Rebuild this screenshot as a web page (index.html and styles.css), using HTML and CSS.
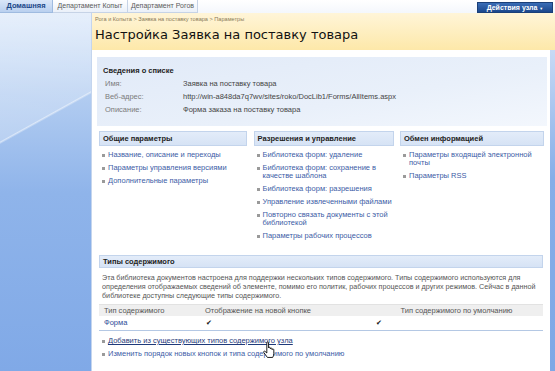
FILE: index.html
```html
<!DOCTYPE html>
<html lang="ru">
<head>
    <meta charset="UTF-8">
    <title>Настройка Заявка на поставку товара</title>
    <link rel="stylesheet" href="styles.css">
</head>
<body>
    <div class="topbar">
        <ul class="tabs">
            <li class="tab tab-home active">Домашняя</li>
            <li class="tab tab-kopyt">Департамент Копыт</li>
            <li class="tab tab-rogov">Департамент Рогов</li>
        </ul>
        <div class="site-actions">Действия узла <span class="caret">▼</span></div>
    </div>

    <div class="page">
        <div class="leftnav"></div>

        <div class="main">
            <div class="titlearea">
                <div class="breadcrumb">Рога и Копыта &gt; Заявка на поставку товара &gt; Параметры</div>
                <h1>Настройка Заявка на поставку товара</h1>
            </div>

            <div class="body-row">
                <div class="content">
                    <div class="listinfo">
                        <div class="listinfo-title">Сведения о списке</div>
                        <div class="info-grid">
                            <div class="info-label">Имя:</div>
                            <div class="info-value">Заявка на поставку товара</div>
                            <div class="info-label">Веб-адрес:</div>
                            <div class="info-value">http://win-a848da7q7wv/sites/roko/DocLib1/Forms/AllItems.aspx</div>
                            <div class="info-label">Описание:</div>
                            <div class="info-value">Форма заказа на поставку товара</div>
                        </div>
                    </div>

                    <div class="settings-cols">
                        <div class="settings-col">
                            <div class="col-head">Общие параметры</div>
                            <ul class="links">
                                <li>Название, описание и переходы</li>
                                <li>Параметры управления версиями</li>
                                <li>Дополнительные параметры</li>
                            </ul>
                        </div>
                        <div class="settings-col">
                            <div class="col-head">Разрешения и управление</div>
                            <ul class="links">
                                <li>Библиотека форм: удаление</li>
                                <li>Библиотека форм: сохранение в качестве шаблона</li>
                                <li>Библиотека форм: разрешения</li>
                                <li>Управление извлеченными файлами</li>
                                <li>Повторно связать документы с этой библиотекой</li>
                                <li>Параметры рабочих процессов</li>
                            </ul>
                        </div>
                        <div class="settings-col">
                            <div class="col-head">Обмен информацией</div>
                            <ul class="links">
                                <li>Параметры входящей электронной почты</li>
                                <li>Параметры RSS</li>
                            </ul>
                        </div>
                    </div>

                    <div class="ctypes">
                        <div class="ct-head">Типы содержимого</div>
                        <p class="ct-desc">Эта библиотека документов настроена для поддержки нескольких типов содержимого. Типы содержимого используются для определения отображаемых сведений об элементе, помимо его политик, рабочих процессов и других режимов. Сейчас в данной библиотеке доступны следующие типы содержимого.</p>
                        <div class="ct-table">
                            <div class="ct-row ct-row-head">
                                <div class="ct-cell">Тип содержимого</div>
                                <div class="ct-cell">Отображение на новой кнопке</div>
                                <div class="ct-cell ct-center">Тип содержимого по умолчанию</div>
                            </div>
                            <div class="ct-row">
                                <div class="ct-cell ct-link">Форма</div>
                                <div class="ct-cell check">✔</div>
                                <div class="ct-cell check">✔</div>
                            </div>
                        </div>
                        <ul class="links ct-links">
                            <li class="hover">Добавить из существующих типов содержимого узла</li>
                            <li>Изменить порядок новых кнопок и типа содержимого по умолчанию</li>
                            <svg class="cursor" width="14" height="18" viewBox="0 0 16 20">
                                <path d="M5.5 1.6C5.5 0.6 7.5 0.6 7.5 1.6L7.5 7.6C7.5 6.6 9.5 6.6 9.5 7.6L9.5 8.6C9.5 7.6 11.5 7.6 11.5 8.6L11.5 9.6C11.5 8.6 13.5 8.6 13.5 9.6L13.5 14C13.5 16 12.8 17.4 12.2 18.5L6.2 18.5C5.2 17 3.6 15 2.2 13.2C1.3 12 2.4 10.7 3.5 11.6L5.5 13.4Z" fill="#fff" stroke="#000" stroke-width="1"/>
                            </svg>
                        </ul>
                    </div>
                </div>
                <div class="rightstrip"></div>
            </div>
        </div>
    </div>
</body>
</html>
```

FILE: styles.css
```css
* {
    box-sizing: border-box;
}

body {
    margin: 0;
    width: 555px;
    height: 371px;
    overflow: hidden;
    background: #fff;
    font-family: "Liberation Sans", Arial, sans-serif;
    font-size: 7.5px;
    color: #333;
}

/* верхняя панель */
.topbar {
    display: flex;
    justify-content: space-between;
    height: 13px;
    background: linear-gradient(#ffffff, #f4f7fc);
}

.tabs {
    display: flex;
    list-style: none;
    margin: 0;
    padding: 0;
}

.tab {
    height: 13px;
    line-height: 12px;
    text-align: center;
    font-size: 7px;
    color: #5b5b5b;
    background: linear-gradient(#ffffff, #eaf0f9);
    border-right: 1px solid #c6d3e6;
    border-bottom: 1px solid #c6d3e6;
}

.tab-home { width: 53px; }
.tab-kopyt { width: 75px; }
.tab-rogov { width: 70px; }

.tab.active {
    background: linear-gradient(#d9e6f8, #b9d0ef);
    color: #1b4788;
    font-weight: bold;
    font-size: 7.5px;
    border-color: #9fbbe0;
}

.site-actions {
    width: 76px;
    height: 11px;
    margin: 2px 2px 0 0;
    background: linear-gradient(#3a6db6, #1b478c);
    border: 1px solid #1a3f78;
    color: #fff;
    font-size: 7px;
    font-weight: bold;
    line-height: 9px;
    text-align: center;
}

.caret {
    font-size: 4px;
    vertical-align: middle;
}

/* основная часть */
.page {
    display: flex;
    height: 358px;
}

.leftnav {
    width: 92px;
    border-right: 1px solid #c4d5ee;
    background:
        linear-gradient(151deg, rgba(255, 255, 255, 0.3) 0, rgba(255, 255, 255, 0.25) 112px, rgba(255, 255, 255, 0.6) 113px, rgba(255, 255, 255, 0) 115px),
        linear-gradient(#dce9fa 0, #b3cdf1 80px, #8fb4ea 180px, #80a9e7 100%);
}

.main {
    flex: 1;
    display: flex;
    flex-direction: column;
}

.titlearea {
    height: 37px;
    padding: 2px 0 0 3px;
    background: linear-gradient(#fff5d8, #fde8a9);
}

.breadcrumb {
    font-size: 5.6px;
    line-height: 8px;
    color: #8a7a58;
}

h1 {
    margin: 3px 0 0;
    font-family: "DejaVu Sans", Verdana, sans-serif;
    font-size: 13px;
    font-weight: normal;
    line-height: 18px;
    color: #111;
}

.body-row {
    flex: 1;
    display: flex;
}

.content {
    flex: 1;
    padding: 7px 3px 0 5px;
}

.rightstrip {
    width: 5px;
    background: linear-gradient(#c8daf5, #86aee8 40%, #7fa8e6);
}

/* сведения о списке */
.listinfo {
    height: 69px;
    padding: 7px 6px 0;
    background: linear-gradient(170deg, #e1eaf8, #e9f0fa 60%, #f3f7fd);
}

.listinfo-title {
    font-weight: bold;
    font-size: 7.5px;
    line-height: 13px;
    color: #222;
}

.info-grid {
    display: grid;
    grid-template-columns: 78px 1fr;
    padding-left: 2px;
    line-height: 13px;
}

.info-label {
    color: #7b7b7b;
}

.info-value {
    color: #444;
}

/* три колонки */
.settings-cols {
    display: grid;
    grid-template-columns: 148px 140px 144px;
    justify-content: space-between;
    margin: 5px 3px 0 2px;
}

.col-head {
    height: 15px;
    line-height: 13px;
    padding-left: 3px;
    background: linear-gradient(#e3ecf9, #d6e3f5);
    border: 1px solid #c3d4ec;
    font-weight: bold;
    color: #222;
}

.links {
    list-style: none;
    margin: 5px 0 0;
    padding: 0;
}

.links li {
    display: flex;
    line-height: 8px;
    margin-bottom: 5px;
    color: #3c5ca6;
}

.links li::before {
    content: "";
    flex-shrink: 0;
    width: 3px;
    height: 3px;
    margin: 2.5px 3px 0 3px;
    background: #9a9a9a;
}

/* типы содержимого */
.ctypes {
    margin: 10px 4px 0 2px;
}

.ct-head {
    height: 13px;
    line-height: 11px;
    padding-left: 3px;
    background: linear-gradient(#e3ecf9, #d6e3f5);
    border: 1px solid #c3d4ec;
    font-weight: bold;
    color: #222;
}

.ct-desc {
    margin: 0;
    padding: 5px 6px 4px 3px;
    font-size: 7.2px;
    line-height: 9px;
    color: #555;
}

.ct-row {
    display: grid;
    grid-template-columns: 101px 170px 1fr;
    height: 15px;
    line-height: 14px;
    border-bottom: 1px solid #b4c8e4;
}

.ct-row-head {
    height: 12px;
    line-height: 12px;
    background: #efefef;
    border-top: 1px solid #e2e2e2;
    border-bottom: none;
    color: #555;
}

.ct-cell {
    padding-left: 5px;
}

.ct-center {
    text-align: center;
    padding-left: 0;
}

.ct-link {
    color: #2d4c98;
}

.check {
    font-family: "DejaVu Sans", sans-serif;
    font-size: 7px;
    color: #111;
    padding-left: 6px;
}

.ct-links {
    position: relative;
    margin-top: 6px;
}

.ct-links li.hover {
    color: #1f3a7a;
    text-decoration: underline;
}

.cursor {
    position: absolute;
    left: 163px;
    top: 4px;
}
```
